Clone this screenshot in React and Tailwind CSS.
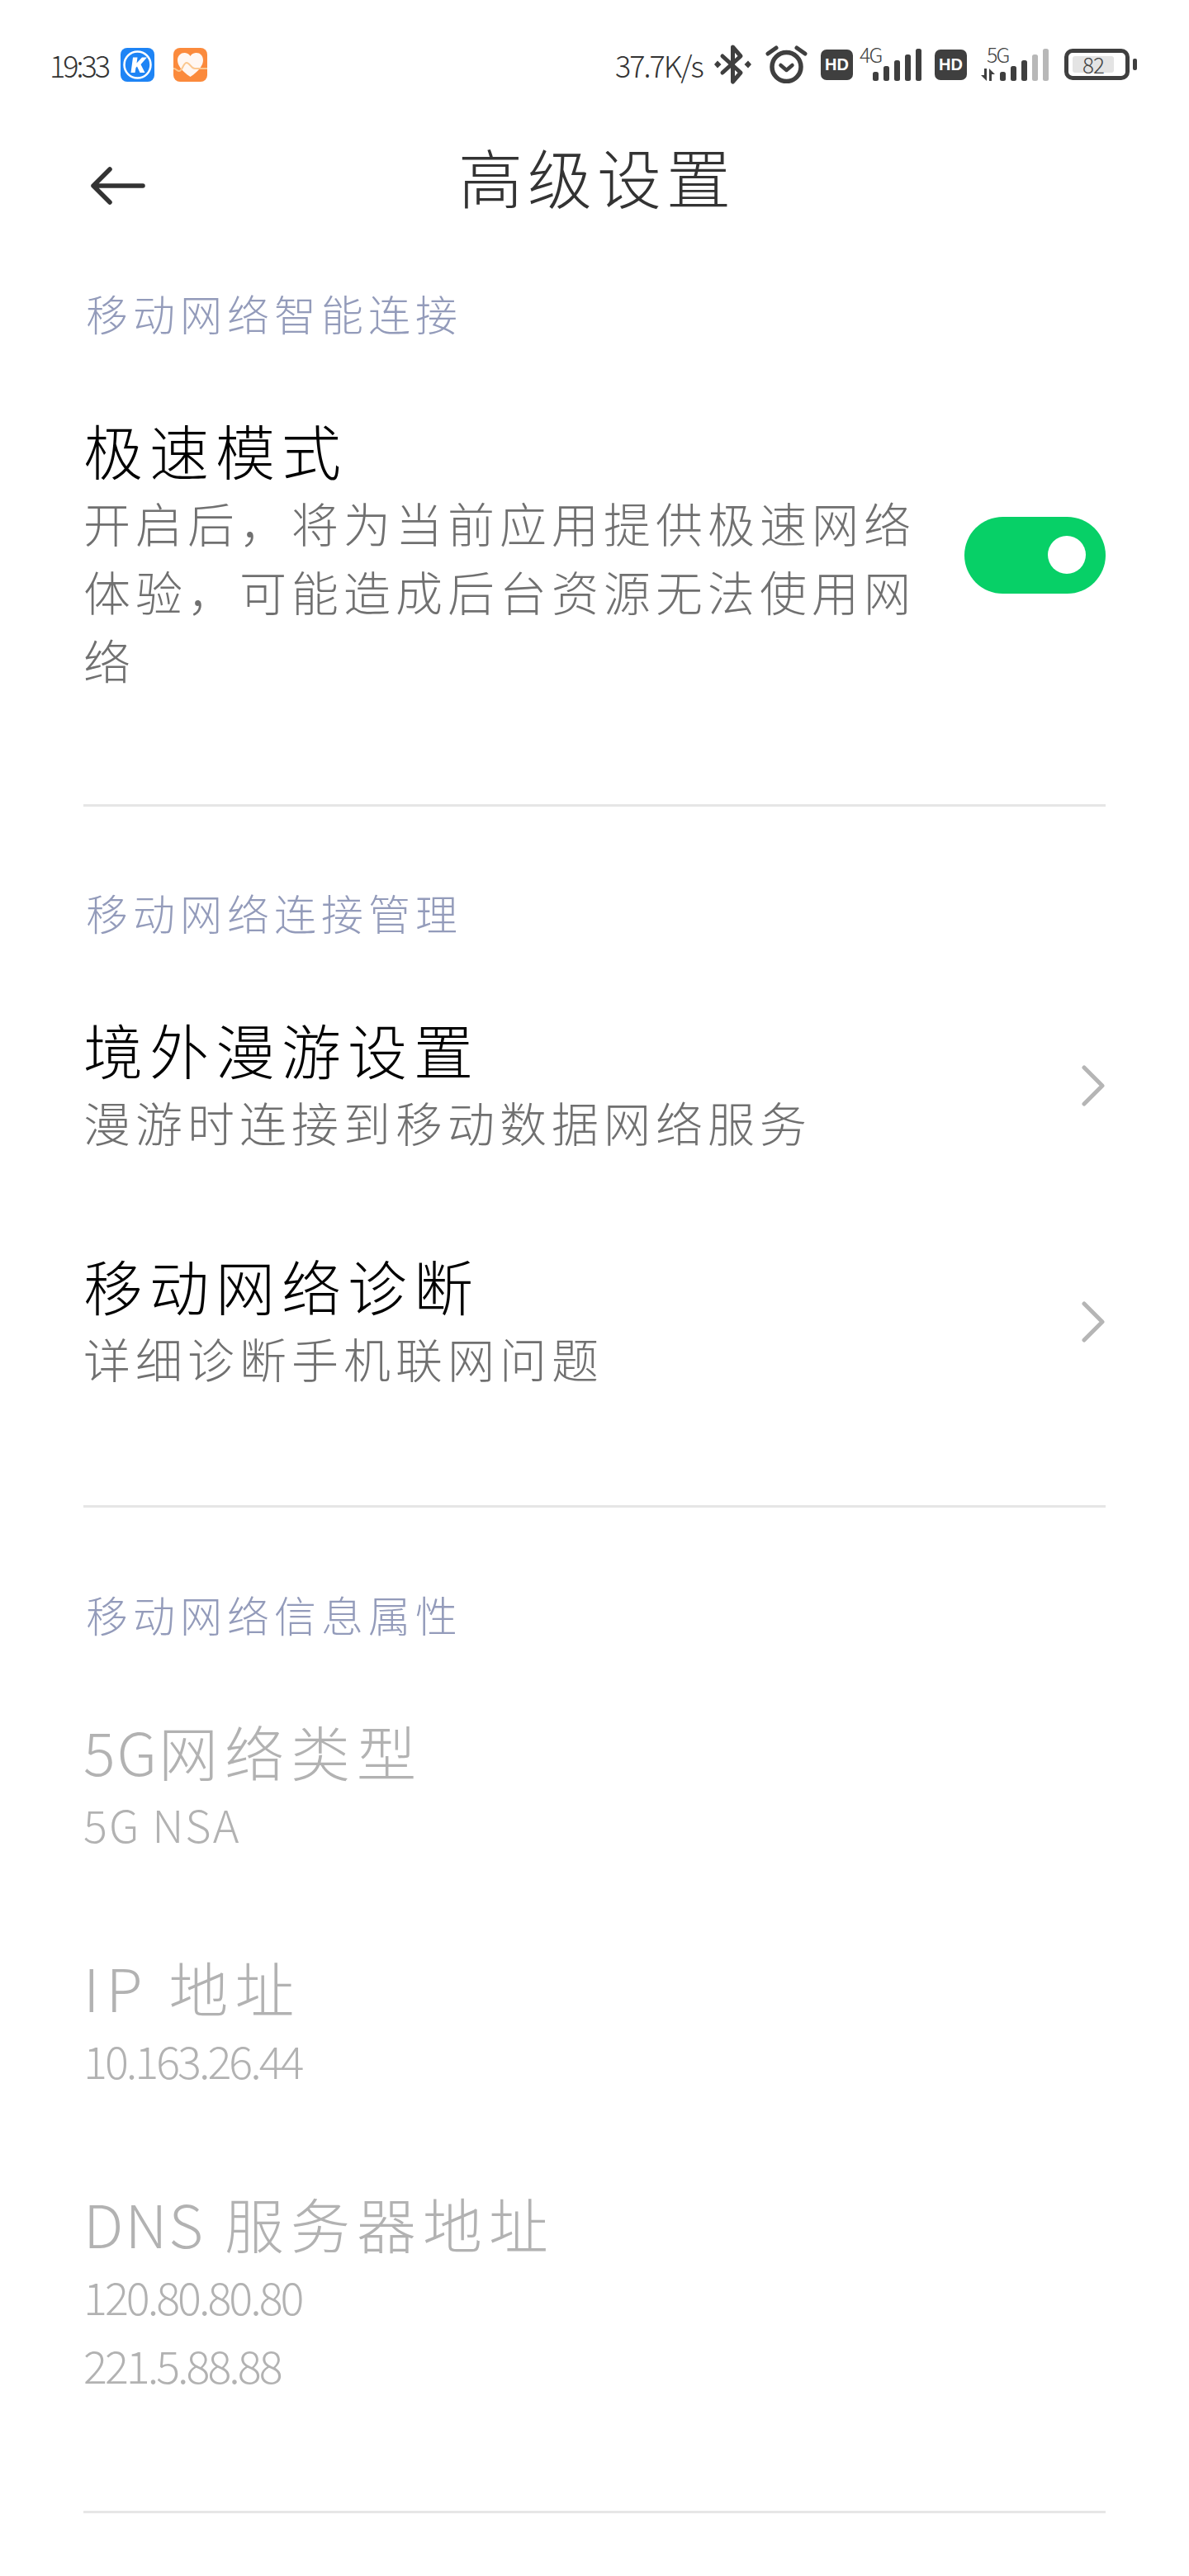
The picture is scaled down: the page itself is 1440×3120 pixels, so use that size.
const bars = [
  { x: 0, h: 11 },
  { x: 13, h: 18 },
  { x: 26, h: 25 },
  { x: 39, h: 32 },
  { x: 52, h: 39 },
];

function KugouIcon() {
  return (
    <svg width="41" height="41" viewBox="0 0 41 41" className="shrink-0">
      <rect width="41" height="41" rx="8" fill="#1e84f5" />
      <circle cx="20.5" cy="20.5" r="16" fill="none" stroke="#fff" strokeWidth="2.5" />
      <path d="M15 11.500h5.500l-1 7 6.500-7h6l-7.500 8.500 5 10h-6l-3.500-7.500-1.500 1.500-1 6h-5z" fill="#fff" />
    </svg>
  );
}

function HealthIcon() {
  return (
    <svg width="41" height="41" viewBox="0 0 41 41" className="shrink-0">
      <rect width="41" height="41" rx="8" fill="#fb8a3c" />
      <path d="M20.5 35 C10 28 5 21 5 15 C5 9 9.5 5.5 14 6 C17 6.3 19.3 8 20.5 10 C21.7 8 24 6.3 27 6 C32 5.5 36 9 36 15 C36 21 31 28 20.5 35z" fill="#fff7f2" />
      <path d="M0 25 C4 25 4 28 7 28 C11 28 12 18 16 18 C20 18 21 25 26 25 L41 25" fill="none" stroke="#fbc78f" strokeWidth="2" />
    </svg>
  );
}

function BluetoothIcon() {
  return (
    <svg width="45" height="50" viewBox="0 0 45 50" className="shrink-0" fill="none">
      <path d="M10 15 L32 35 L22.500 46 V4 L32 15 L10 35" stroke="#3f3f3f" strokeWidth="5" strokeLinejoin="round" strokeLinecap="round" />
      <path d="M4 20.500 L8.500 25 L4 29.500 L0 25z M41 20.500 L45 25 L41 29.500 L36.500 25z" fill="#3f3f3f" />
    </svg>
  );
}

function AlarmIcon() {
  return (
    <svg width="51" height="46" viewBox="0 0 51 46" className="shrink-0" fill="none" stroke="#3f3f3f" strokeLinecap="round">
      <circle cx="25.500" cy="26" r="17.500" strokeWidth="5.500" />
      <path d="M3 10 L13 3 M38 3 L48 10" strokeWidth="5" />
      <path d="M18.500 24 L25.500 30 L32.500 24" strokeWidth="4.500" strokeLinejoin="round" />
    </svg>
  );
}

function HdBadge() {
  return (
    <div className="flex h-[37px] w-[39px] shrink-0 items-center justify-center rounded-[7px] bg-[#3f3f3f] font-['Liberation_Sans',sans-serif] text-[20px] leading-none font-bold text-white">
      HD
    </div>
  );
}

function Signal({ label, dim, arrows }) {
  const w = arrows ? 84 : 75;
  const left = arrows ? 24 : 16;
  return (
    <div className={`relative h-[46px] shrink-0 ${arrows ? "w-[84px]" : "w-[75px]"}`}>
      <span className={`absolute top-[-4px] text-[25px] leading-[28px] font-light tracking-[-2px] text-[#444] ${arrows ? "left-[8px]" : "left-0"}`}>
        {label}
      </span>
      <svg width={w} height="46" viewBox={`0 0 ${w} 46`}>
        {arrows && <path d="M8 28 v15 l-7-7 h4 v-8z M11 28 l7 7 h-4 v8 h-3z" fill="#3f3f3f" />}
        {bars.map((b, i) => (
          <rect
            key={i}
            x={left + b.x}
            y={43 - b.h}
            width="7"
            height={b.h}
            rx="2.500"
            fill={dim && i > 2 ? "#b8b8b8" : "#3f3f3f"}
          />
        ))}
      </svg>
    </div>
  );
}

function Battery() {
  return (
    <div className="flex shrink-0 items-center gap-[4px]">
      <div className="flex h-[38px] w-[79px] items-center rounded-[10px] border-[5px] border-[#3f3f3f] pl-[5px]">
        <div className="flex h-[20px] w-[50px] items-center justify-center rounded-[3px] bg-[#e4e4e4] text-[26px] leading-none font-light tracking-[-1px] text-[#444]">
          82
        </div>
      </div>
      <div className="h-[14px] w-[5px] rounded-[2px] bg-[#3f3f3f]"></div>
    </div>
  );
}

function StatusBar() {
  return (
    <div className="flex h-[156px] items-center justify-between pr-[63px] pl-[60px]">
      <div className="flex items-center gap-[11px]">
        <span className="w-[75px] text-[36px] leading-none font-light tracking-[-3px] whitespace-nowrap text-[#333]">19:33</span>
        <KugouIcon />
        <div className="ml-[12px]">
          <HealthIcon />
        </div>
      </div>
      <div className="flex items-center">
        <span className="w-[110px] text-[36px] leading-none font-light tracking-[-2px] whitespace-nowrap text-[#333]">37.7K/s</span>
        <div className="ml-[10px]">
          <BluetoothIcon />
        </div>
        <div className="ml-[17px]">
          <AlarmIcon />
        </div>
        <div className="ml-[16px]">
          <HdBadge />
        </div>
        <div className="ml-[8px]">
          <Signal label="4G" />
        </div>
        <div className="ml-[16px]">
          <HdBadge />
        </div>
        <div className="ml-[16px]">
          <Signal label="5G" dim arrows />
        </div>
        <div className="ml-[18px]">
          <Battery />
        </div>
      </div>
    </div>
  );
}

function Header() {
  return (
    <div className="relative flex h-[138px] items-center px-[110px]">
      <svg width="66" height="46" viewBox="0 0 66 46" fill="none" stroke="#333" strokeWidth="5.500" strokeLinecap="round" strokeLinejoin="round">
        <path d="M3 23 H63 M23 3 L3 23 L23 43" />
      </svg>
      {/* title sits a little above the arrow */}
      <h1 className="absolute inset-x-0 top-0 pl-[6px] text-center text-[78px] leading-[114px] font-light tracking-[6px] text-[#333]">
        高级设置
      </h1>
    </div>
  );
}

function SectionLabel({ children }) {
  return (
    <div className="mb-[27px] ml-[3px] h-[80px] text-[51px] leading-[80px] font-light tracking-[6px] text-[#939bba]">
      {children}
    </div>
  );
}

function Chevron() {
  return (
    <svg width="30" height="50" viewBox="0 0 30 50" fill="none" stroke="#b5b5b5" strokeWidth="5" strokeLinecap="round" strokeLinejoin="round" className="mr-[1px] shrink-0">
      <path d="M5 3 L27 25 L5 47" />
    </svg>
  );
}

function Toggle() {
  return (
    <div className="flex h-[93px] w-[171px] shrink-0 items-center justify-end rounded-full bg-[#07d067] pr-[24px]">
      <div className="h-[46px] w-[46px] rounded-full bg-white"></div>
    </div>
  );
}

function Item({ title, lines, disabled, latin, right }) {
  return (
    <div className="flex items-center justify-between py-[58px]">
      <div className="w-[1040px]">
        <div className={`h-[80px] text-[72px] leading-[80px] font-light tracking-[8px] ${disabled ? "text-[#b2b2b2]" : "text-black"}`}>
          {title}
        </div>
        <div
          className={`mt-[7px] leading-[83px] font-light ${
            latin ? "text-[54px] tracking-[-3px]" : "text-[57px] tracking-[6px]"
          } ${disabled ? "text-[#b2b2b2]" : "text-[#707070]"}`}
        >
          {lines.map((l, i) => (
            <div key={i}>{l}</div>
          ))}
        </div>
      </div>
      {right}
    </div>
  );
}

export default function App() {
  return (
    <div className="h-[3120px] overflow-hidden bg-white font-['Noto_Sans_CJK_SC','Noto_Sans',sans-serif]">
      <StatusBar />
      <Header />
      <div className="px-[101px] pt-[45px]">
        <SectionLabel>移动网络智能连接</SectionLabel>
        <Item
          title="极速模式"
          lines={["开启后，将为当前应用提供极速网络体验，可能造成后台资源无法使用网络"]}
          right={<Toggle />}
        />
        <div className="mt-[76px] mb-[88px] h-[3px] bg-[#e6e6e6]"></div>

        <SectionLabel>移动网络连接管理</SectionLabel>
        <Item title="境外漫游设置" lines={["漫游时连接到移动数据网络服务"]} right={<Chevron />} />
        <Item title="移动网络诊断" lines={["详细诊断手机联网问题"]} right={<Chevron />} />
        <div className="mt-[79px] mb-[89px] h-[3px] bg-[#e6e6e6]"></div>

        <SectionLabel>移动网络信息属性</SectionLabel>
        <Item
          disabled
          title={
            <>
              <span className="tracking-[2px]">5G</span>网络类型
            </>
          }
          lines={[<span className="tracking-[2px]">5G NSA</span>]}
          latin
        />
        <Item disabled latin title="IP 地址" lines={["10.163.26.44"]} />
        <Item
          disabled
          latin
          title={
            <>
              <span className="tracking-[2px]">DNS</span> 服务器地址
            </>
          }
          lines={["120.80.80.80", "221.5.88.88"]}
        />
        <div className="mt-[78px] h-[3px] bg-[#e6e6e6]"></div>
      </div>
    </div>
  );
}
